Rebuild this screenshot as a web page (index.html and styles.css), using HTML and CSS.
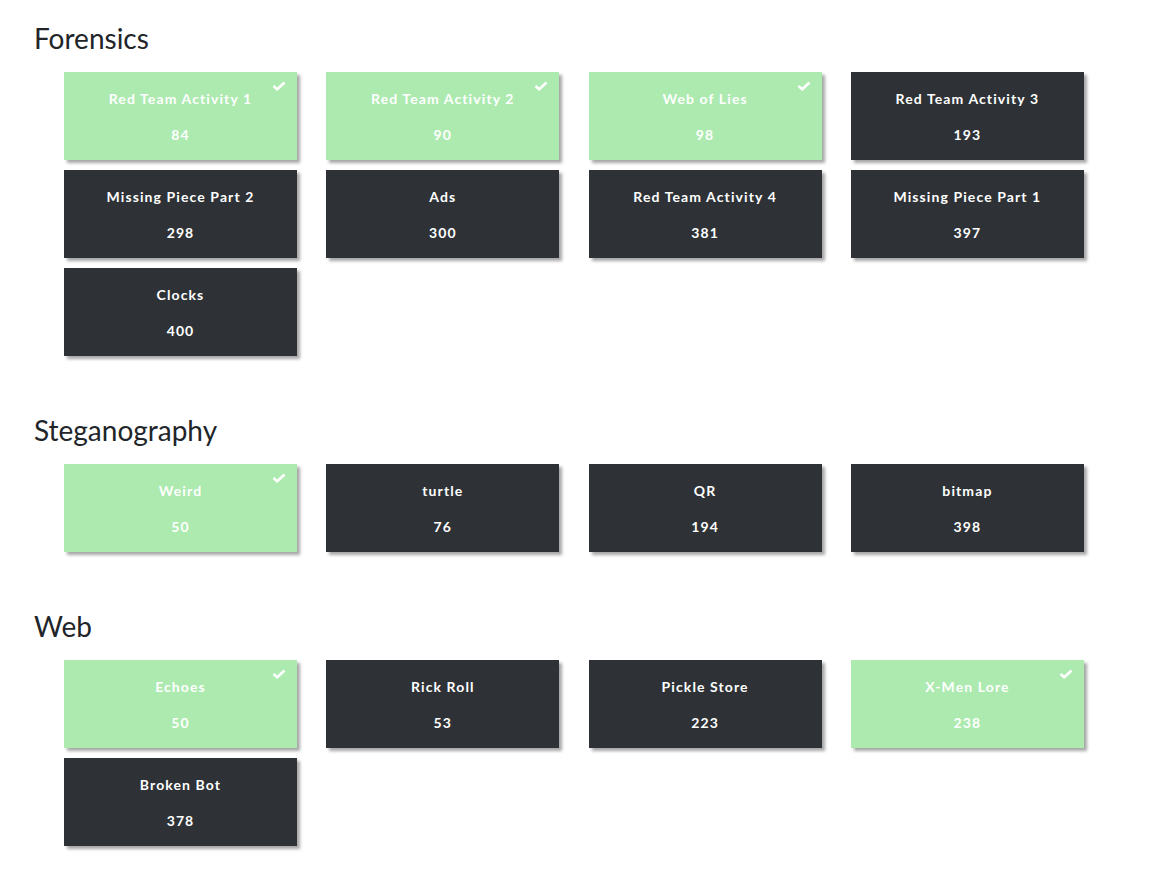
FILE: index.html
```html
<!DOCTYPE html>
<html lang="en">
<head>
    <meta charset="UTF-8">
    <meta name="viewport" content="width=device-width, initial-scale=1.0">
    <title>Challenges</title>
    <link rel="stylesheet" href="styles.css">
</head>
<body>
    <div class="board">

        <div class="category">
            <h3 class="category-header">Forensics</h3>
            <div class="challenge-grid">
                <button class="challenge solved">
                    <svg class="check" viewBox="0 0 14 10"><path d="M1.5 5 L5.2 8.3 L12.5 1.5"/></svg>
                    <p class="challenge-name">Red Team Activity 1</p>
                    <span class="challenge-value">84</span>
                </button>
                <button class="challenge solved">
                    <svg class="check" viewBox="0 0 14 10"><path d="M1.5 5 L5.2 8.3 L12.5 1.5"/></svg>
                    <p class="challenge-name">Red Team Activity 2</p>
                    <span class="challenge-value">90</span>
                </button>
                <button class="challenge solved">
                    <svg class="check" viewBox="0 0 14 10"><path d="M1.5 5 L5.2 8.3 L12.5 1.5"/></svg>
                    <p class="challenge-name">Web of Lies</p>
                    <span class="challenge-value">98</span>
                </button>
                <button class="challenge">
                    <p class="challenge-name">Red Team Activity 3</p>
                    <span class="challenge-value">193</span>
                </button>
                <button class="challenge">
                    <p class="challenge-name">Missing Piece Part 2</p>
                    <span class="challenge-value">298</span>
                </button>
                <button class="challenge">
                    <p class="challenge-name">Ads</p>
                    <span class="challenge-value">300</span>
                </button>
                <button class="challenge">
                    <p class="challenge-name">Red Team Activity 4</p>
                    <span class="challenge-value">381</span>
                </button>
                <button class="challenge">
                    <p class="challenge-name">Missing Piece Part 1</p>
                    <span class="challenge-value">397</span>
                </button>
                <button class="challenge">
                    <p class="challenge-name">Clocks</p>
                    <span class="challenge-value">400</span>
                </button>
            </div>
        </div>

        <div class="category">
            <h3 class="category-header">Steganography</h3>
            <div class="challenge-grid">
                <button class="challenge solved">
                    <svg class="check" viewBox="0 0 14 10"><path d="M1.5 5 L5.2 8.3 L12.5 1.5"/></svg>
                    <p class="challenge-name">Weird</p>
                    <span class="challenge-value">50</span>
                </button>
                <button class="challenge">
                    <p class="challenge-name">turtle</p>
                    <span class="challenge-value">76</span>
                </button>
                <button class="challenge">
                    <p class="challenge-name">QR</p>
                    <span class="challenge-value">194</span>
                </button>
                <button class="challenge">
                    <p class="challenge-name">bitmap</p>
                    <span class="challenge-value">398</span>
                </button>
            </div>
        </div>

        <div class="category">
            <h3 class="category-header">Web</h3>
            <div class="challenge-grid">
                <button class="challenge solved">
                    <svg class="check" viewBox="0 0 14 10"><path d="M1.5 5 L5.2 8.3 L12.5 1.5"/></svg>
                    <p class="challenge-name">Echoes</p>
                    <span class="challenge-value">50</span>
                </button>
                <button class="challenge">
                    <p class="challenge-name">Rick Roll</p>
                    <span class="challenge-value">53</span>
                </button>
                <button class="challenge">
                    <p class="challenge-name">Pickle Store</p>
                    <span class="challenge-value">223</span>
                </button>
                <button class="challenge solved">
                    <svg class="check" viewBox="0 0 14 10"><path d="M1.5 5 L5.2 8.3 L12.5 1.5"/></svg>
                    <p class="challenge-name">X-Men Lore</p>
                    <span class="challenge-value">238</span>
                </button>
                <button class="challenge">
                    <p class="challenge-name">Broken Bot</p>
                    <span class="challenge-value">378</span>
                </button>
            </div>
        </div>

    </div>
</body>
</html>
```

FILE: styles.css
```css
body {
    margin: 0;
    font-family: Lato, "Open Sans", sans-serif;
    color: #212529;
    background-color: #fff;
}
.board {
    padding: 21px 34px 0 34px;
}
.category {
    margin-bottom: 57px;
}
.category:last-child {
    margin-bottom: 20px;
}
.category-header {
    font-size: 28px;
    font-weight: 400;
    line-height: 34px;
    margin: 0 0 17px 0;
}
.challenge-grid {
    display: grid;
    grid-template-columns: repeat(4, 233px);
    column-gap: 29.3px;
    row-gap: 10px;
    margin-left: 30px;
}
.challenge {
    position: relative;
    height: 88px;
    border: none;
    padding: 18px 10px 0 10px;
    display: flex;
    flex-direction: column;
    align-items: center;
    background-color: #2e3236;
    color: #fff;
    font-family: Lato, "Open Sans", sans-serif;
    font-weight: 700;
    font-size: 14px;
    letter-spacing: 1.1px;
    box-shadow: 3px 3px 3px rgba(0, 0, 0, 0.35);
    cursor: pointer;
}
.challenge.solved {
    background-color: #aceab0;
}
.challenge-name {
    margin: 0;
    line-height: 17px;
}
.challenge-value {
    margin-top: 19px;
    line-height: 17px;
}
.check {
    position: absolute;
    top: 9px;
    right: 11px;
    width: 14px;
    height: 10px;
    fill: none;
    stroke: #fff;
    stroke-width: 2.6;
}
```
